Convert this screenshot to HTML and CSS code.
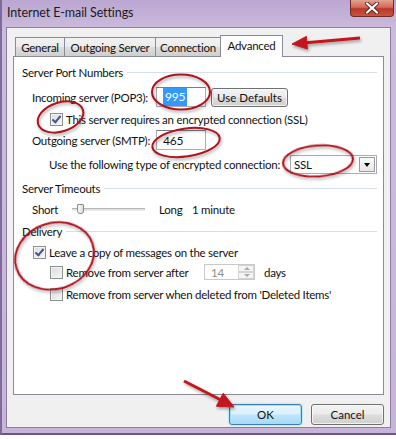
FILE: index.html
```html
<!DOCTYPE html>
<html lang="en">
<head>
    <meta charset="UTF-8">
    <meta name="viewport" content="width=device-width, initial-scale=1.0">
    <title>Internet E-mail Settings</title>
    <link rel="stylesheet" href="styles.css">
</head>
<body>
<div class="window">
    <div class="titlebar">
        <span class="title">Internet E-mail Settings</span>
        <div class="close">
            <svg width="16" height="12" viewBox="0 0 16 12">
                <path d="M3 1.5 L13 10.5 M13 1.5 L3 10.5" stroke="#5a2a22" stroke-width="4" stroke-linecap="round"/>
                <path d="M3 1.5 L13 10.5 M13 1.5 L3 10.5" stroke="#fff" stroke-width="2.2" stroke-linecap="round"/>
            </svg>
        </div>
    </div>

    <div class="client">
        <div class="tabs">
            <div class="tab t-general">General</div>
            <div class="tab t-outgoing">Outgoing Server</div>
            <div class="tab t-conn">Connection</div>
            <div class="tab t-adv active">Advanced</div>
        </div>

        <div class="panel">
            <div class="group g1"><span>Server Port Numbers</span></div>

            <div class="row r-in">
                <span class="label port-label">Incoming server (POP3):</span>
                <div class="textbox"><span class="sel">995</span></div>
                <button class="btn defaults">Use Defaults</button>
            </div>

            <div class="row r-ssl indent2">
                <span class="check on"></span>
                <span>This server requires an encrypted connection (SSL)</span>
            </div>

            <div class="row r-out">
                <span class="label port-label">Outgoing server (SMTP):</span>
                <div class="textbox"><span class="val">465</span></div>
            </div>

            <div class="row r-enc">
                <span class="label enc-label">Use the following type of encrypted connection:</span>
                <div class="combo">
                    <span class="combo-text">SSL</span>
                    <span class="combo-btn"></span>
                </div>
            </div>

            <div class="group g2"><span>Server Timeouts</span></div>

            <div class="row r-time">
                <span class="label short">Short</span>
                <div class="slider"><span class="thumb"></span></div>
                <span class="long">Long</span>
                <span>1 minute</span>
            </div>

            <div class="group g3"><span>Delivery</span></div>

            <div class="row r-leave indent1">
                <span class="check on"></span>
                <span>Leave a copy of messages on the server</span>
            </div>

            <div class="row r-after indent2">
                <span class="check"></span>
                <span class="after-label">Remove from server after</span>
                <div class="spin">
                    <span class="spin-val">14</span>
                    <span class="spin-btns"><i class="up"></i><i class="down"></i></span>
                </div>
                <span class="days">days</span>
            </div>

            <div class="row r-del indent2">
                <span class="check"></span>
                <span>Remove from server when deleted from 'Deleted Items'</span>
            </div>
        </div>

        <div class="buttons">
            <button class="btn dlg default">OK</button>
            <button class="btn dlg">Cancel</button>
        </div>
    </div>

    <!-- red annotations drawn over the screenshot -->
    <svg class="marks" width="396" height="439" viewBox="0 0 396 439">
        <defs>
            <filter id="sh" x="-20%" y="-20%" width="140%" height="160%">
                <feDropShadow dx="1" dy="2" stdDeviation="1.4" flood-color="#000" flood-opacity="0.35"/>
            </filter>
        </defs>
        <g fill="none" stroke="#ad121b" stroke-width="2" filter="url(#sh)">
            <ellipse cx="179" cy="92" rx="29" ry="17.5"/>
            <ellipse cx="58.5" cy="117" rx="23.5" ry="14.5" transform="rotate(-18 58.5 117)"/>
            <ellipse cx="184" cy="142.5" rx="34" ry="14" transform="rotate(-8 184 142.5)"/>
            <ellipse cx="316" cy="161" rx="35" ry="15.5" transform="rotate(-4 316 161)"/>
            <ellipse cx="52.5" cy="256" rx="40" ry="33" transform="rotate(-18 52.5 256)"/>
        </g>
        <g fill="#c3141d" stroke="#c3141d" filter="url(#sh)">
            <line x1="358" y1="38" x2="304" y2="42.7" stroke-width="3"/>
            <polygon points="290,44 305.4,49 304.4,36.4" stroke-width="1"/>
            <line x1="182" y1="381" x2="219" y2="400" stroke-width="3"/>
            <polygon points="232,407 214.4,406.2 221.2,393.2" stroke-width="1"/>
        </g>
    </svg>
</div>
</body>
</html>
```

FILE: styles.css
```css
body {
    margin: 0;
    background: #fff;
    font-family: Lato, "Segoe UI", sans-serif;
    font-size: 11.5px;
    letter-spacing: -0.25px;
    color: #111;
}
.window {
    position: relative;
    width: 396px;
    height: 435px;
    box-sizing: border-box;
    background: linear-gradient(180deg, #bba6d2 0%, #cbbcdc 30px, #c6b5d8 100%);
    border-left: 2px solid #7f6a9c;
    border-bottom: 2px solid #6a5683;
    padding: 0 5px 5px 4px;
}
.titlebar {
    height: 27px;
    display: flex;
    justify-content: space-between;
    align-items: flex-start;
}
.title {
    margin: 5px 0 0 1px;
    color: #1b1b1b;
    font-size: 12.5px;
    letter-spacing: -0.1px;
}
.close {
    width: 44px;
    height: 17px;
    margin-right: -3px;
    box-sizing: border-box;
    border: 1px solid #6e2c25;
    border-top: none;
    border-radius: 0 0 4px 4px;
    background: linear-gradient(180deg, #e4a191 0%, #d36a58 45%, #b9372a 55%, #c9563f 100%);
    display: flex;
    align-items: center;
    justify-content: center;
}
.client {
    height: 401px;
    box-sizing: border-box;
    background: #f0f0f0;
    border: 1px solid #8c7d9f;
    padding: 7px 6px 0 6px;
}
.tabs {
    display: flex;
    height: 21px;
    padding-left: 2px;
    position: relative;
    z-index: 1;
}
.tab {
    margin-top: 2px;
    height: 19px;
    box-sizing: border-box;
    border: 1px solid #898c95;
    border-bottom: none;
    margin-right: -1px;
    background: linear-gradient(180deg, #f2f2f2 0%, #ebebeb 50%, #dddddd 51%, #cfcfcf 100%);
    display: flex;
    align-items: center;
    justify-content: center;
    white-space: nowrap;
    color: #111;
}
.t-general { width: 50px; }
.t-outgoing { width: 92px; }
.t-conn { width: 66px; }
.t-adv { width: 63px; }
.tab.active {
    margin-top: 0;
    height: 22px;
    background: #fff;
    padding-bottom: 3px;
}
.panel {
    height: 339px;
    box-sizing: border-box;
    background: #fff;
    border: 1px solid #898c95;
    padding: 5px 6px 0 8px;
}
.group {
    display: flex;
    align-items: center;
}
.group::after {
    content: "";
    flex: 1;
    height: 1px;
    margin-left: 4px;
    background: #d5dfe5;
}
.g1 { height: 20px; }
.g2 { height: 28px; }
.g3 { height: 30px; }
.row {
    display: flex;
    align-items: center;
    padding-left: 10px;
    white-space: nowrap;
}
.indent1 { padding-left: 11px; }
.indent2 { padding-left: 28px; }
.r-in { height: 30px; }
.r-ssl { height: 14px; }
.r-out { height: 28px; }
.r-enc { height: 20px; padding-left: 27px; }
.r-time { height: 14px; }
.r-leave { height: 12px; }
.r-after { height: 28px; }
.r-del { height: 16px; }

.port-label { width: 124px; }
.enc-label { width: 241px; }
.textbox {
    width: 50px;
    height: 20px;
    box-sizing: border-box;
    border: 1px solid #abadb3;
    border-top-color: #7a7d85;
    background: #fff;
    display: flex;
    align-items: center;
    padding-left: 6px;
}
.sel {
    background: #3399ff;
    color: #fff;
    padding: 1px 2px 2px 2px;
    font-size: 12px;
}
.val { padding-left: 0; font-size: 12px; }
.btn {
    font: inherit;
    color: #111;
    box-sizing: border-box;
    border: 1px solid #707070;
    border-radius: 3px;
    background: linear-gradient(180deg, #f2f2f2 0%, #ebebeb 48%, #dddddd 52%, #cfcfcf 100%);
    padding: 0;
    box-shadow: inset 0 0 0 1px rgba(255,255,255,0.7);
}
.defaults {
    width: 77px;
    height: 19px;
    margin-left: 5px;
}
.combo {
    width: 87px;
    height: 19px;
    box-sizing: border-box;
    border: 1px solid #a5acb5;
    background: #fff;
    display: flex;
    align-items: center;
    justify-content: space-between;
    padding: 0 1px 0 3px;
}
.combo-btn {
    width: 16px;
    height: 15px;
    box-sizing: border-box;
    border: 1px solid #9a9a9a;
    background: linear-gradient(180deg, #fafafa, #e6e6e6);
    position: relative;
}
.combo-btn::after {
    content: "";
    position: absolute;
    left: 4px;
    top: 5px;
    border-left: 3.5px solid transparent;
    border-right: 3.5px solid transparent;
    border-top: 4px solid #000;
}
.short { width: 40px; }
.slider {
    width: 73px;
    height: 3px;
    box-sizing: border-box;
    border-top: 1px solid #b3b3b3;
    border-bottom: 1px solid #e7eaea;
    background: #e2e2e2;
    position: relative;
}
.thumb {
    position: absolute;
    left: 5px;
    top: -5px;
    width: 5px;
    height: 8px;
    border: 1px solid #8a8a8a;
    border-radius: 1px 1px 3px 3px;
    background: linear-gradient(90deg, #fafafa, #dcdcdc);
}
.long {
    margin-left: 14px;
    width: 33px;
}
.check {
    width: 13px;
    height: 13px;
    flex: none;
    box-sizing: border-box;
    border: 1px solid #8e8f8f;
    background: linear-gradient(135deg, #dcdcdc, #f6f6f6);
    box-shadow: inset 0 0 0 1px #f4f4f4;
    margin-right: 3px;
    position: relative;
}
.check.on::after {
    content: "";
    position: absolute;
    left: 3px;
    top: 0;
    width: 3px;
    height: 7px;
    border-right: 2px solid #3f5687;
    border-bottom: 2px solid #3f5687;
    transform: rotate(40deg);
}
.after-label { width: 138px; }
.spin {
    width: 51px;
    height: 16px;
    box-sizing: border-box;
    border: 1px solid #c9c9c9;
    background: #fff;
    display: flex;
    align-items: center;
    justify-content: space-between;
    padding-left: 6px;
    color: #8d8d8d;
}
.spin-btns {
    width: 16px;
    height: 14px;
    display: flex;
    flex-direction: column;
}
.spin-btns i {
    flex: 1;
    border: 1px solid #d4d4d4;
    background: #f4f4f4;
    position: relative;
}
.spin-btns i::after {
    content: "";
    position: absolute;
    left: 5px;
    top: 1px;
    border-left: 3px solid transparent;
    border-right: 3px solid transparent;
}
.spin-btns .up::after { border-bottom: 3px solid #a8a8a8; }
.spin-btns .down::after { border-top: 3px solid #a8a8a8; }
.days { margin-left: 9px; }
.buttons {
    display: flex;
    justify-content: flex-end;
    gap: 9px;
    margin-top: 9px;
}
.dlg {
    width: 73px;
    height: 21px;
}
.default {
    border-color: #3c7fb1;
    background: linear-gradient(180deg, #eaf6fd 0%, #d9f0fc 48%, #bee6fd 52%, #a7d9f5 100%);
    box-shadow: inset 0 0 0 1px #9fe0f9, 0 0 2px #6fd0f5;
}
.marks {
    position: absolute;
    left: 0;
    top: 0;
    pointer-events: none;
}
```
